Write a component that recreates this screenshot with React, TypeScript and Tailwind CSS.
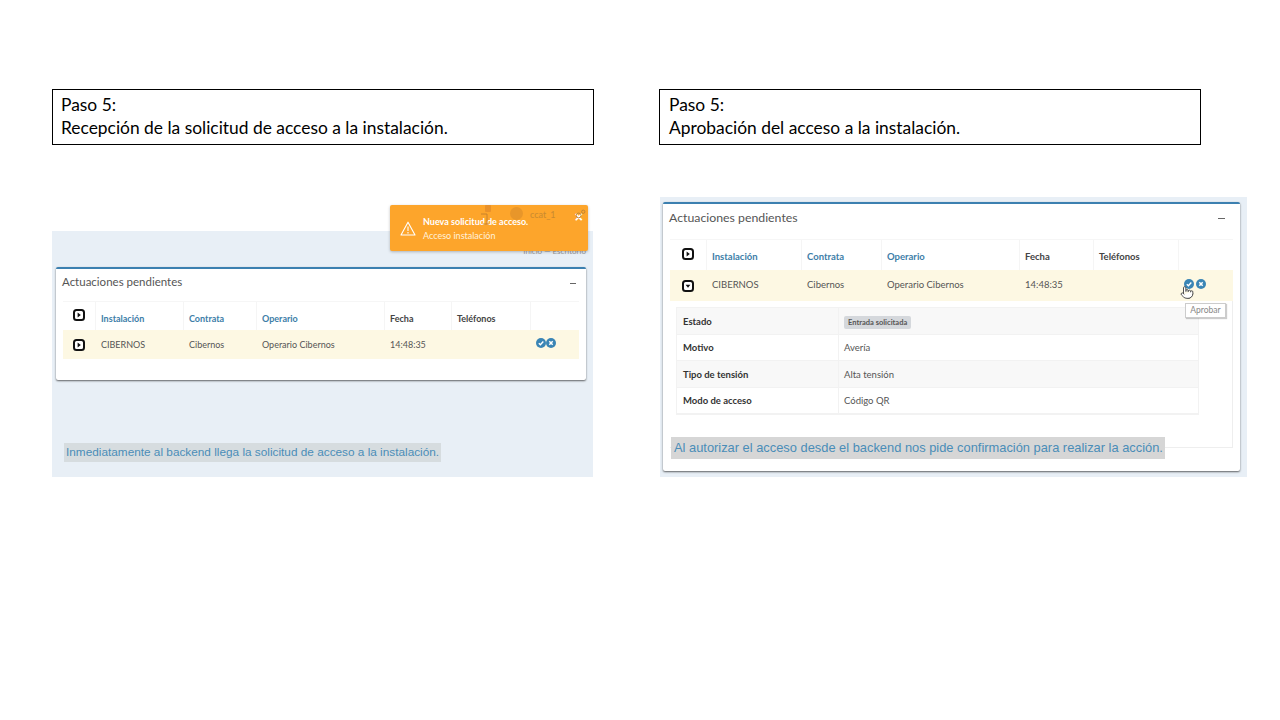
import { Pointer } from "lucide-react";

const uiFont = "font-['Lato','Noto_Sans',sans-serif]";

function ToggleIcon({ open = false }: { open?: boolean }) {
  return (
    <svg viewBox="0 0 12 12" className="h-3 w-3 text-[#111]">
      <rect x="1" y="1" width="10" height="10" rx="2.5" fill="#fff" stroke="currentColor" strokeWidth="2" />
      {open ? <path d="M3.6 4.8h4.8L6 7.8z" fill="currentColor" /> : <path d="M4.6 3.6v4.8L7.8 6z" fill="currentColor" />}
    </svg>
  );
}

function CheckIcon() {
  return (
    <svg viewBox="0 0 10 10" className="h-[10px] w-[10px]">
      <circle cx="5" cy="5" r="5" fill="#3a85b5" />
      <path d="M2.8 5.2l1.6 1.5 2.9-3.2" fill="none" stroke="#fff" strokeWidth="1.4" />
    </svg>
  );
}

function CancelIcon() {
  return (
    <svg viewBox="0 0 10 10" className="h-[10px] w-[10px]">
      <circle cx="5" cy="5" r="5" fill="#3a85b5" />
      <path d="M3.3 3.3l3.4 3.4M6.7 3.3l-3.4 3.4" fill="none" stroke="#fff" strokeWidth="1.5" />
    </svg>
  );
}

function SlideTitle({ lines, pad }: { lines: string[]; pad: string }) {
  return (
    <div className={`flex h-14 w-[542px] flex-col justify-center border border-black bg-white ${pad} pb-[2px] font-['Lato',sans-serif] text-[17.4px] leading-[23px] text-black`}>
      {lines.map((line) => (
        <div key={line} className="whitespace-nowrap">
          {line}
        </div>
      ))}
    </div>
  );
}

function PendingRow({
  cols,
  headH,
  rowH,
  size,
  iconGap,
  open,
}: {
  cols: string;
  headH: string;
  rowH: string;
  size: string;
  iconGap: string;
  open?: boolean;
}) {
  const heads = ["Instalación", "Contrata", "Operario"];
  const cellHead = "flex items-center border-l border-[#f5f5f5] px-[5px] pt-[5px] font-bold";
  return (
    <div className={`${uiFont} ${size}`}>
      <div className={`grid ${cols} ${headH} border-t border-[#f6f6f6] bg-white`}>
        <div className="flex items-center justify-center pb-[2px]">
          <ToggleIcon />
        </div>
        {heads.map((h) => (
          <div key={h} className={`${cellHead} text-[#3d7ea8]`}>
            {h}
          </div>
        ))}
        <div className={`${cellHead} text-[#444]`}>Fecha</div>
        <div className={`${cellHead} text-[#444]`}>Teléfonos</div>
        <div className="border-l border-[#f5f5f5]" />
      </div>
      <div className={`grid ${cols} ${rowH} items-center bg-[#fdf8e3] text-[#555]`}>
        <div className="flex justify-center">
          <ToggleIcon open={open} />
        </div>
        <div className="px-[6px]">CIBERNOS</div>
        <div className="px-[6px]">Cibernos</div>
        <div className="px-[6px]">Operario Cibernos</div>
        <div className="px-[6px]">14:48:35</div>
        <div />
        <div className={`flex ${iconGap} pb-[3px] pl-[6px]`}>
          <CheckIcon />
          <CancelIcon />
        </div>
      </div>
    </div>
  );
}

function DetailRow({ label, striped, children }: { label: string; striped?: boolean; children: React.ReactNode }) {
  return (
    <div
      className={`grid h-[26.6px] grid-cols-[162px_1fr] items-center border-b border-[#f2f2f2] text-[9.5px] ${
        striped ? "bg-[#f8f8f8]" : "bg-white"
      }`}
    >
      <div className="flex h-full items-center border-r border-[#f2f2f2] pl-[6px] pt-[2px] font-bold text-[#333]">{label}</div>
      <div className="pl-[5px] pt-[2px] text-[#555]">{children}</div>
    </div>
  );
}

function Toast() {
  return (
    <div className="absolute left-[338px] top-[-26px] h-[46px] w-[198px] rounded-[2px] bg-[#fda52b] shadow-[0_1px_3px_rgba(0,0,0,0.25)]">
      <svg viewBox="0 0 16 15" className="absolute left-[10px] top-[16px] h-[15px] w-[16px]">
        <path d="M8 1.2L15 14H1z" fill="none" stroke="#fff" strokeWidth="1.1" strokeLinejoin="round" />
        <path d="M8 5.5v4.5M8 11v1.4" stroke="#fff" strokeWidth="1.1" />
      </svg>
      <div className={`absolute left-[33px] top-[10px] ${uiFont} text-[9px] leading-[13px] text-white`}>
        <div className="font-bold">Nueva solicitud de acceso.</div>
        <div className="mt-[1px] text-[#fff1dc]">Acceso instalación</div>
      </div>
      <span className="absolute right-[5px] top-[7px] font-['Liberation_Sans',sans-serif] text-[14px] font-bold leading-[11px] text-white">
        ×
      </span>
      {/* la cabecera de la app se transparenta bajo el aviso */}
      <svg viewBox="0 0 12 20" className="absolute left-[90px] top-0 h-[20px] w-[12px]">
        <rect x="5" y="0" width="6" height="7" rx="1" fill="#e8912a" />
        <path d="M1 9h6v10M3 19h6" fill="none" stroke="#c8822c" strokeWidth="1" />
      </svg>
      <span className="absolute left-[120px] top-[2px] h-[13px] w-[13px] rounded-full bg-[#e8962a]" />
      <span className={`absolute left-[140px] top-[3px] ${uiFont} text-[9px] text-[#c98a30]`}>ccat_1</span>
      <svg viewBox="0 0 12 12" className="absolute left-[185px] top-[4px] h-[11px] w-[11px]">
        <circle cx="4" cy="7" r="2.6" fill="none" stroke="#b98238" strokeWidth="1" />
        <circle cx="9" cy="3" r="1.8" fill="none" stroke="#b98238" strokeWidth="1" />
      </svg>
    </div>
  );
}

export default function App() {
  return (
    <div className="flex h-[720px] w-[1280px] gap-[65px] overflow-hidden bg-white pl-[52px] pt-[89px]">
      {/* Izquierda */}
      <div className="w-[542px]">
        <SlideTitle pad="px-[8px]" lines={["Paso 5:", "Recepción de la solicitud de acceso a la instalación."]} />
        <div className="relative mt-[86px] h-[246px] w-[541px] bg-[#e8eff6] pl-1 pt-9">
          <div className={`absolute right-[7px] top-[14px] ${uiFont} text-[8px] text-[#999]`}>Inicio — Escritorio</div>
          <Toast />
          <div className="h-[113px] w-[530px] rounded-[2px] border-t-[2.5px] border-[#3c80b0] bg-white shadow-[0_1px_2px_rgba(0,0,0,0.6)]">
            <div className={`flex h-[32px] items-start justify-between pl-[6px] pr-[10px] pt-[4px] ${uiFont} text-[11.5px] text-[#555]`}>
              <span>Actuaciones pendientes</span>
              <span className="mt-[10px] h-px w-[6px] bg-[#666]" />
            </div>
            <div className="px-[7px]">
              <PendingRow
                cols="grid-cols-[32px_88px_73px_128px_67px_79px_49px]"
                headH="h-[29px]"
                rowH="h-[29px]"
                size="text-[9px]"
                iconGap="gap-0"
              />
            </div>
          </div>
          <div className="mt-[63px] ml-[8px] flex h-[19px] w-[377px] items-center whitespace-nowrap bg-[#d6dcdf] pl-[2px] font-['Liberation_Sans',sans-serif] text-[11.8px] text-[#4a8db8]">
            Inmediatamente al backend llega la solicitud de acceso a la instalación.
          </div>
        </div>
      </div>

      {/* Derecha */}
      <div className="w-[542px]">
        <SlideTitle pad="px-[9px]" lines={["Paso 5:", "Aprobación del acceso a la instalación."]} />
        <div className="mt-[52px] ml-[1px] h-[280px] w-[587px] bg-[#e8eff6] pl-[3px] pt-[5px]">
          <div className="relative h-[269px] w-[577px] rounded-[2px] border-t-[2.5px] border-[#3c80b0] bg-white px-[7px] shadow-[0_1px_2px_rgba(0,0,0,0.6)]">
            <div className={`-mx-[7px] flex h-[35px] items-start justify-between pl-[6px] pr-[15px] pt-[5px] ${uiFont} text-[12.3px] text-[#555]`}>
              <span>Actuaciones pendientes</span>
              <span className="mt-[9px] h-px w-[7px] bg-[#666]" />
            </div>
            <PendingRow
              cols="grid-cols-[36px_95px_80px_138px_74px_85px_54px]"
              headH="h-[31px]"
              rowH="h-[31px]"
              size="text-[9.5px]"
              iconGap="gap-[2px]"
              open
            />
            <div className="h-[147px] border-r border-b border-[#eeeeee] pt-[6px]">
              <div className={`ml-[6px] w-[523px] border border-[#f2f2f2] ${uiFont}`}>
                <DetailRow label="Estado" striped>
                  <span className="rounded-[2px] bg-[#d5d8dc] px-1 py-[2px] text-[7.5px] font-bold text-[#555]">Entrada solicitada</span>
                </DetailRow>
                <DetailRow label="Motivo">Avería</DetailRow>
                <DetailRow label="Tipo de tensión" striped>
                  Alta tensión
                </DetailRow>
                <DetailRow label="Modo de acceso">Código QR</DetailRow>
              </div>
            </div>
            <div className="-mt-[11px] ml-[1px] relative flex h-[22px] w-[494px] items-center whitespace-nowrap bg-[#d6d6d6] pl-[3px] font-['Liberation_Sans',sans-serif] text-[12.87px] text-[#4a8db8]">
              Al autorizar el acceso desde el backend nos pide confirmación para realizar la acción.
            </div>
            <Pointer className="absolute left-[517px] top-[80px] h-[17px] w-[14px] fill-white text-[#444]" strokeWidth={1.6} />
            <div className={`absolute left-[522px] top-[99px] flex h-[15px] w-[41px] items-center justify-center border border-[#ccc] bg-white ${uiFont} text-[8.5px] text-[#888] shadow-[1px_1px_1px_rgba(0,0,0,0.2)]`}>
              Aprobar
            </div>
          </div>
        </div>
      </div>
    </div>
  );
}
